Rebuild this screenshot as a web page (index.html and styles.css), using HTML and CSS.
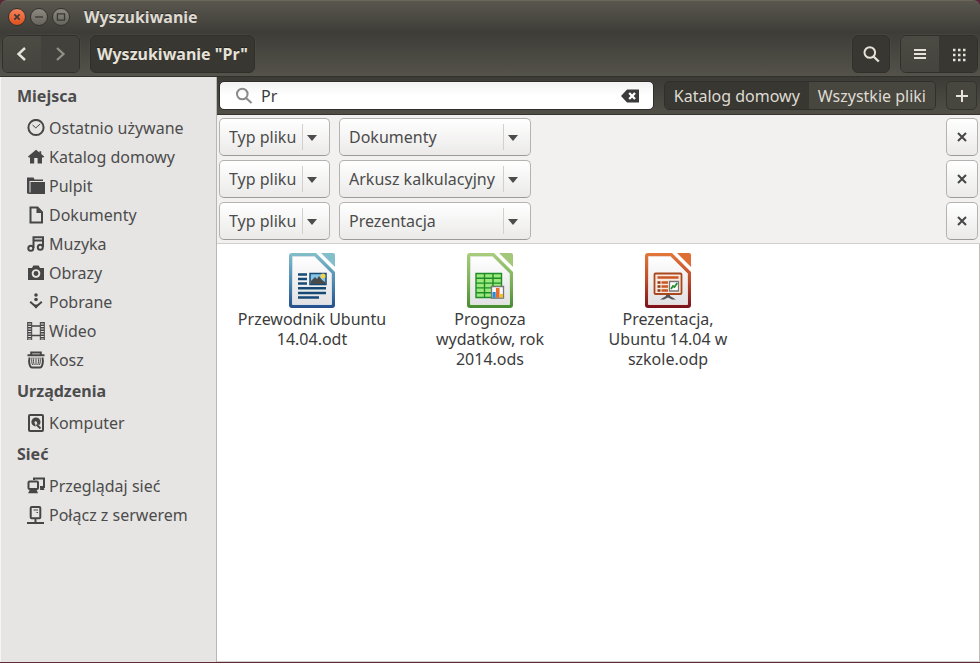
FILE: index.html
```html
<!DOCTYPE html>
<html lang="pl">
<head>
<meta charset="utf-8">
<title>Wyszukiwanie</title>
<link rel="stylesheet" href="styles.css">
</head>
<body>
<div class="window">
  <header class="titlebar">
    <button class="wm wm-close" aria-label="Zamknij"><svg viewBox="0 0 18 18"><path d="M6 6l6 6M12 6l-6 6" stroke-width="1.8"/></svg></button>
    <button class="wm" aria-label="Minimalizuj"><svg viewBox="0 0 18 18"><path d="M4.500 9h9" stroke-width="1.500"/></svg></button>
    <button class="wm" aria-label="Maksymalizuj"><svg viewBox="0 0 18 18"><path d="M5 5.500h8v7H5z" stroke-width="1.500"/></svg></button>
    <h1 class="title">Wyszukiwanie</h1>
  </header>

  <nav class="toolbar">
    <div class="group">
      <button class="tool" aria-label="Wstecz"><svg viewBox="0 0 18 18"><path d="M12 3L5.500 9l6.500 6" stroke-width="2.400"/></svg></button>
      <button class="tool pressed" disabled aria-label="Dalej"><svg viewBox="0 0 18 18"><path d="M6 3l6.500 6L6 15" stroke-width="2.200"/></svg></button>
    </div>
    <button class="tool path pressed">Wyszukiwanie "Pr"</button>
    <span class="spacer"></span>
    <button class="tool single pressed" aria-label="Szukaj"><svg viewBox="0 0 18 18"><circle cx="7.800" cy="7.500" r="5.300" stroke-width="2"/><path d="M11.500 11.500l5.300 5" stroke-width="2.400"/></svg></button>
    <div class="group">
      <button class="tool" aria-label="Lista"><svg viewBox="0 0 18 18"><path d="M3 5h12M3 9h12M3 13h12" stroke-width="2"/></svg></button>
      <button class="tool pressed" aria-label="Ikony"><svg viewBox="0 0 18 18"><path d="M4 5h12.500M4 10h12.500M4 15h12.500" stroke-width="2.400" stroke-dasharray="2.500 2.500"/></svg></button>
    </div>
  </nav>

  <div class="body">
    <aside class="sidebar">
      <h2>Miejsca</h2>
      <ul>
        <li><a href="#"><svg viewBox="0 0 18 18"><circle cx="9" cy="8.500" r="7.600" class="s2"/><path d="M5.500 6l3.300 2.900L13.200 5" class="s1"/></svg>Ostatnio używane</a></li>
        <li><a href="#"><svg viewBox="0 0 18 18"><path class="f" d="M9 1.800L1 8.400l.8 1.100H3v6h4.200V10h3.400v5.500H15v-6h1.400l.8-1.100-3-2.500V3.200h-1.800v1.300z"/></svg>Katalog domowy</a></li>
        <li><a href="#"><svg viewBox="0 0 18 18"><path class="f" d="M0 .5h6.500l1 2H16V4H2.500v12.500H0z"/><path class="f" d="M3.500 5H18v12H1.500v-1.500h2z"/></svg>Pulpit</a></li>
        <li><a href="#"><svg viewBox="0 0 18 18"><path class="s2" d="M3.500 1.500h7l4.500 4.600v10.400H3.500z"/><path class="f" d="M9.500 1.500v5.500H15z"/></svg>Dokumenty</a></li>
        <li><a href="#"><svg viewBox="0 0 18 18"><path class="s2" d="M6.500 13V2.300h9.500V12M6.500 5.500H16"/><circle class="s2" cx="3.800" cy="13.200" r="2.500"/><circle class="s2" cx="13.300" cy="12.300" r="2.500"/></svg>Muzyka</a></li>
        <li><a href="#"><svg viewBox="0 0 18 18"><path class="f" fill-rule="evenodd" d="M1 4h4l1.300-2.500h5.400L13 4h4v12H1zM9 5.200a4.300 4.300 0 1 0 .01 0z"/><circle class="f" cx="9" cy="9.500" r="2.400"/></svg>Obrazy</a></li>
        <li><a href="#"><svg viewBox="0 0 18 18"><circle class="f" cx="9" cy="2" r="1.800"/><circle class="f" cx="9" cy="6.500" r="1.800"/><path class="s2" d="M3.200 8.700L9 14l5.800-5.300"/><path class="f" d="M6 11.500h6l-3 4.200z"/></svg>Pobrane</a></li>
        <li><a href="#"><svg viewBox="0 0 18 18"><path class="film" d="M2.700 0v18M15.300 0v18"/><path class="s1" d="M.7 0v18M4.700 0v18M13.300 0v18M17.300 0v18"/><path class="bar" d="M4.500 4h9M4.500 13.500h9"/></svg>Wideo</a></li>
        <li><a href="#"><svg viewBox="0 0 18 18"><path class="s2" d="M4.200 4V1.600h9.600V4M.5 4.200h17M2.600 6.500c-1.200 4 0 10 2.400 10h8c2.400 0 3.600-6 2.400-10"/><path class="s1" d="M7 6.500c-.8 3-.5 5.500.3 7.500M11 6.500c.8 3 .5 5.500-.3 7.500M9 6.500V14M5 6.500c-.6 3-.2 6 .6 7.500M13 6.500c.6 3 .2 6-.6 7.500"/></svg>Kosz</a></li>
      </ul>
      <h2>Urządzenia</h2>
      <ul>
        <li><a href="#"><svg viewBox="0 0 18 18"><rect class="s2" x="2" y="1" width="14" height="16" rx="1"/><path class="f" d="M9 3.500a4.500 4.500 0 0 1 4.500 4.500c0 1.500-.7 2.500-1.500 3.300L9.800 9.300a1.300 1.300 0 1 0-1.600.5l.5 2.700A4.500 4.500 0 0 1 9 3.500z"/><path class="s2" d="M9.500 10.500l4 4"/></svg>Komputer</a></li>
      </ul>
      <h2>Sieć</h2>
      <ul>
        <li><a href="#"><svg viewBox="0 0 18 18"><path class="s2" d="M7 3V1.500h10V10h-4"/><path class="f" d="M13.500 9h2.500l1.500 4h-4.500z"/><rect class="s2" x="1.500" y="4.500" width="9.500" height="7.500" rx="1"/><path class="f" d="M3 12.500h6.500l1.500 3.800H1z"/></svg>Przeglądaj sieć</a></li>
        <li><a href="#"><svg viewBox="0 0 18 18"><rect class="s2" x="3.700" y="1" width="9.600" height="11.200" rx="1"/><path class="s1" d="M6.500 4h4.500M9.500 6.500H11"/><path class="s2" d="M8.500 12v5M0 17h17"/></svg>Połącz z serwerem</a></li>
      </ul>
    </aside>

    <main class="content">
      <form class="searchbar">
        <div class="field">
          <svg class="glass" viewBox="0 0 18 18"><circle cx="7.300" cy="7" r="5.300"/><path d="M11 11l5.500 5"/></svg>
          <input type="text" value="Pr" aria-label="Szukaj">
          <button type="button" class="clear" aria-label="Wyczyść"><svg viewBox="0 0 18 14"><path fill="#3b3b3b" d="M0 7l6-6.500h12v13H6z"/><path d="M8.200 4l5.800 6M14 4L8.200 10" stroke="#fff" stroke-width="2.300"/></svg></button>
        </div>
        <div class="scope">
          <button type="button" class="pressed">Katalog domowy</button>
          <button type="button">Wszystkie pliki</button>
        </div>
        <button type="button" class="add" aria-label="Dodaj"><svg viewBox="0 0 14 14"><path d="M7 1v12M1 7h12"/></svg></button>
      </form>

      <section class="filters">
        <div class="filter">
          <span class="drop kind"><select aria-label="Kryterium"><option>Typ pliku</option></select></span>
          <span class="drop value"><select aria-label="Typ"><option>Dokumenty</option></select></span>
          <button class="remove" aria-label="Usuń"><svg viewBox="0 0 10 10"><path d="M1 1l8 8M9 1L1 9"/></svg></button>
        </div>
        <div class="filter">
          <span class="drop kind"><select aria-label="Kryterium"><option>Typ pliku</option></select></span>
          <span class="drop value"><select aria-label="Typ"><option>Arkusz kalkulacyjny</option></select></span>
          <button class="remove" aria-label="Usuń"><svg viewBox="0 0 10 10"><path d="M1 1l8 8M9 1L1 9"/></svg></button>
        </div>
        <div class="filter">
          <span class="drop kind"><select aria-label="Kryterium"><option>Typ pliku</option></select></span>
          <span class="drop value"><select aria-label="Typ"><option>Prezentacja</option></select></span>
          <button class="remove" aria-label="Usuń"><svg viewBox="0 0 10 10"><path d="M1 1l8 8M9 1L1 9"/></svg></button>
        </div>
      </section>

      <section class="files">
        <figure>
          <svg viewBox="0 0 48 56">
            <defs>
              <linearGradient id="blue" x2="0" y2="1"><stop offset="0" stop-color="#83bfca"/><stop offset=".55" stop-color="#4b86b0"/><stop offset="1" stop-color="#244f8c"/></linearGradient>
              <linearGradient id="paper" x2="0" y2="1"><stop offset="0" stop-color="#fff"/><stop offset="1" stop-color="#e2e2e4"/></linearGradient>
            </defs>
            <path fill="url(#blue)" d="M4 1h24l19 19v33q0 3-3 3H4q-3 0-3-3V4q0-3 3-3z"/>
            <path fill="#83bfca" d="M33 1h12q2 0 2 2v12z"/>
            <path fill="url(#paper)" stroke="#d4dfe8" d="M4.500 4.500h22L43.500 21.500v31h-39z"/>
            <g stroke="#164a75" stroke-width="2.400"><path d="M10 22.500h9M10 27h9M10 31.500h9M10 36.200h28M10 41h28M10 45.500h21"/></g>
            <path fill="#85c6e6" stroke="#164a75" stroke-width="1.500" d="M22 21.500h16v11H22z"/>
            <circle cx="35" cy="24" r="2.500" fill="#f3d34d"/>
            <path fill="#4a4a4a" d="M23 32v-3l4-4 2 2 2-3 3 4 3 2v2z"/>
          </svg>
          <figcaption>Przewodnik Ubuntu<br>14.04.odt</figcaption>
        </figure>
        <figure>
          <svg viewBox="0 0 48 56">
            <defs><linearGradient id="green" x2="0" y2="1"><stop offset="0" stop-color="#a9cd7e"/><stop offset=".6" stop-color="#75ad51"/><stop offset="1" stop-color="#478b32"/></linearGradient></defs>
            <path fill="url(#green)" d="M4 1h24l19 19v33q0 3-3 3H4q-3 0-3-3V4q0-3 3-3z"/>
            <path fill="#a3c879" d="M33 1h12q2 0 2 2v12z"/>
            <path fill="url(#paper)" stroke="#dce6d5" d="M4.500 4.500h22L43.500 21.500v31h-39z"/>
            <path fill="#9be87c" stroke="#1f8c28" stroke-width="1.400" d="M10 21.500h25.500v24H10zM18.500 21.500v24M27 21.500v24M10 26.300h25.500M10 31.100h25.500M10 35.900h25.500M10 40.700h25.500"/>
            <path fill="#fafafa" stroke="#777" stroke-width="1.300" d="M25.500 34.500h12v11.500h-12z"/>
            <path fill="#258bd3" d="M26.500 40h3.200v5.500h-3.200z"/><path fill="#e96b2d" d="M30 36h3.500v9.500H30z"/><path fill="#f2c51c" d="M33.800 42h3.200v3.500h-3.200z"/>
          </svg>
          <figcaption>Prognoza<br>wydatków, rok<br>2014.ods</figcaption>
        </figure>
        <figure>
          <svg viewBox="0 0 48 56">
            <defs><linearGradient id="red" x2="0" y2="1"><stop offset="0" stop-color="#e3783a"/><stop offset=".5" stop-color="#bd4b2b"/><stop offset="1" stop-color="#7a101d"/></linearGradient></defs>
            <path fill="url(#red)" d="M4 1h24l19 19v33q0 3-3 3H4q-3 0-3-3V4q0-3 3-3z"/>
            <path fill="#dd6f35" d="M33 1h12q2 0 2 2v12z"/>
            <path fill="url(#paper)" stroke="#ecd9d2" d="M4.500 4.500h22L43.500 21.500v31h-39z"/>
            <path fill="#555" d="M22 42h4v2l6 3.500h-4l-4-2-4 2h-4l6-3.500z"/>
            <rect x="10.500" y="21.500" width="27" height="20.500" rx="1" fill="#fbe9df" stroke="#a8481f" stroke-width="1.800"/>
            <path stroke="#c85725" stroke-width="2.400" d="M13.500 25.500h21M17.500 30.500h6.500M17.500 34.500h6.500M17.500 38.500h6.500"/>
            <path stroke="#8f3a17" stroke-width="2.400" d="M13.500 30.500h3M13.500 34.500h3M13.500 38.500h3"/>
            <path fill="#fff" stroke="#777" stroke-width="1.300" d="M25.500 29.500h9v9.500h-9z"/><path fill="none" stroke="#24912f" stroke-width="1.800" d="M27 37l2-3 1.500 1 2.700-4"/>
          </svg>
          <figcaption>Prezentacja,<br>Ubuntu 14.04 w<br>szkole.odp</figcaption>
        </figure>
      </section>
    </main>
  </div>
</div>
</body>
</html>
```
FILE: styles.css
```css
* {
  box-sizing: border-box;
}

body {
  margin: 0;
  background: #5a2638;
  color: #4c4c4c;
  font: 16px/20px "Noto Sans", "Open Sans", sans-serif;
}

button,
input,
select {
  margin: 0;
  padding: 0;
  border: 0;
  background: none;
  color: inherit;
  font: inherit;
}

svg {
  display: block;
  fill: none;
}

.window {
  display: flex;
  flex-direction: column;
  min-height: 100vh;
  border-bottom: 1px solid #5f2c35;
}

.titlebar {
  display: flex;
  align-items: center;
  gap: 4px;
  height: 32px;
  padding: 0 8px;
  border-top: 1px solid #69675c;
  border-radius: 7px 7px 0 0;
  background: linear-gradient(#59574e, #3e3d38);
}

.wm {
  width: 18px;
  height: 18px;
  border: 1px solid #34332e;
  border-radius: 50%;
  background: linear-gradient(#8c8a80, #66645c);
}

.wm svg {
  width: 16px;
  height: 16px;
  stroke: #3a3934;
}

.wm-close {
  background: linear-gradient(#f5835c, #e0501e);
}

.title {
  margin: 0 0 0 10px;
  color: #dfdbd2;
  font-size: 16px;
  text-shadow: 0 -1px #2c2b27;
}

.toolbar {
  display: flex;
  gap: 10px;
  height: 45px;
  padding: 3px 2px;
  border-bottom: 1px solid #32312c;
  background: linear-gradient(#3d3c37, #54524a);
  color: #e6e2d9;
}

.spacer {
  flex: 1;
}

.group,
.single,
.path {
  border: 1px solid #302f2b;
  border-radius: 6px;
  box-shadow: 0 0 0 1px #55534b55;
}

.group {
  display: flex;
  overflow: hidden;
}

.tool {
  display: flex;
  align-items: center;
  justify-content: center;
  min-width: 38px;
  background: linear-gradient(#4b4a43, #45443e);
}

.tool svg {
  width: 18px;
  height: 18px;
  stroke: currentColor;
}

.tool:disabled {
  color: #929087;
}

.tool.pressed {
  background: #383732;
}

.tool:disabled.pressed {
  background: #42413b;
}

.path {
  padding: 0 6px;
  font-weight: bold;
  text-shadow: 0 -1px #22211e;
}

.body {
  display: flex;
  flex: 1;
}

.sidebar {
  flex: 0 0 217px;
  padding: 2px 0 0 16px;
  border-left: 1px solid #f4f4f3;
  border-right: 1px solid #b9b7b3;
  background: #e6e5e4;
}

.sidebar h2 {
  margin: 0;
  font-size: 16px;
  line-height: 34px;
}

.sidebar ul {
  margin: 0;
  padding: 0 0 0 10px;
  list-style: none;
}

.sidebar a {
  display: flex;
  align-items: center;
  gap: 4px;
  height: 29px;
  color: inherit;
  text-decoration: none;
  white-space: nowrap;
}

.sidebar svg {
  width: 18px;
  height: 18px;
  stroke: none;
}

.f {
  fill: #464646;
}

.s1,
.s2,
.bar,
.film {
  stroke: #464646;
}

.s2 {
  stroke-width: 2;
}

.bar {
  stroke-width: 1.5;
}

.film {
  stroke-width: 4;
  stroke-dasharray: 1.5 1;
}

.content {
  display: flex;
  flex: 1;
  flex-direction: column;
  min-width: 0;
}

.searchbar {
  display: flex;
  gap: 10px;
  height: 38px;
  padding: 4px 3px 4px 2px;
  border-bottom: 1px solid #34332e;
  background: linear-gradient(#3c3b36, #504e46);
  color: #dfdbd2;
}

.field {
  display: flex;
  flex: 1;
  align-items: center;
  min-width: 0;
  padding: 0 14px 0 15px;
  border: 1px solid #2f2e2a;
  border-radius: 5px;
  background: linear-gradient(#f2f2f2, #fff 50%);
  color: #3c3c3c;
}

.field input {
  flex: 1;
  min-width: 0;
  padding: 0 8px;
  outline: none;
}

.glass {
  width: 18px;
  height: 18px;
  stroke: #8a8a8a;
  stroke-width: 2;
}

.clear svg {
  width: 18px;
  height: 14px;
}

.scope {
  display: flex;
  overflow: hidden;
  border: 1px solid #302f2b;
  border-radius: 5px;
}

.scope button {
  padding: 0 9px;
  background: #47463f;
  white-space: nowrap;
}

.scope .pressed {
  background: #383732;
}

.add {
  display: flex;
  align-items: center;
  justify-content: center;
  width: 31px;
  border: 1px solid #34332e;
  border-radius: 5px;
  background: #47463f;
}

.add svg {
  width: 14px;
  height: 14px;
  stroke: #e6e2d9;
  stroke-width: 2;
}

.filters {
  display: flex;
  flex-direction: column;
  gap: 4px;
  padding: 3px 2px;
  border-bottom: 1px solid #d0cfcc;
  background: #f2f1f0;
}

.filter {
  display: flex;
  gap: 9px;
}

.drop,
.remove {
  height: 38px;
  border: 1px solid #b5b3b0;
  border-bottom-color: #9c9a97;
  border-radius: 5px;
  background: linear-gradient(#fff, #ebeae9);
}

.drop {
  position: relative;
}

.kind {
  width: 111px;
}

.value {
  width: 192px;
}

.drop select {
  width: 100%;
  height: 100%;
  padding: 0 28px 0 9px;
  appearance: none;
  outline: none;
}

.drop::before {
  position: absolute;
  top: 5px;
  right: 26px;
  bottom: 5px;
  border-left: 1px solid #d2d0cd;
  content: "";
}

.drop::after {
  position: absolute;
  top: 16px;
  right: 12px;
  border: 5px solid transparent;
  border-top: 6px solid #4c4c4c;
  border-bottom: 0;
  content: "";
  pointer-events: none;
}

.remove {
  display: flex;
  align-items: center;
  justify-content: center;
  width: 32px;
  margin-left: auto;
}

.remove svg {
  width: 10px;
  height: 10px;
  stroke: #464646;
  stroke-width: 2;
}

.files {
  display: flex;
  flex: 1;
  align-items: flex-start;
  padding: 8px 6px;
  border-right: 1px solid #c0bebb;
  border-bottom: 1px solid #d0cfcc;
  background: #fff;
}

.files figure {
  display: flex;
  flex-direction: column;
  align-items: center;
  width: 178px;
  margin: 0;
  text-align: center;
}

.files svg {
  width: 48px;
  height: 56px;
}

.files figcaption {
  margin-top: 1px;
  color: #3c3c3c;
}
```
